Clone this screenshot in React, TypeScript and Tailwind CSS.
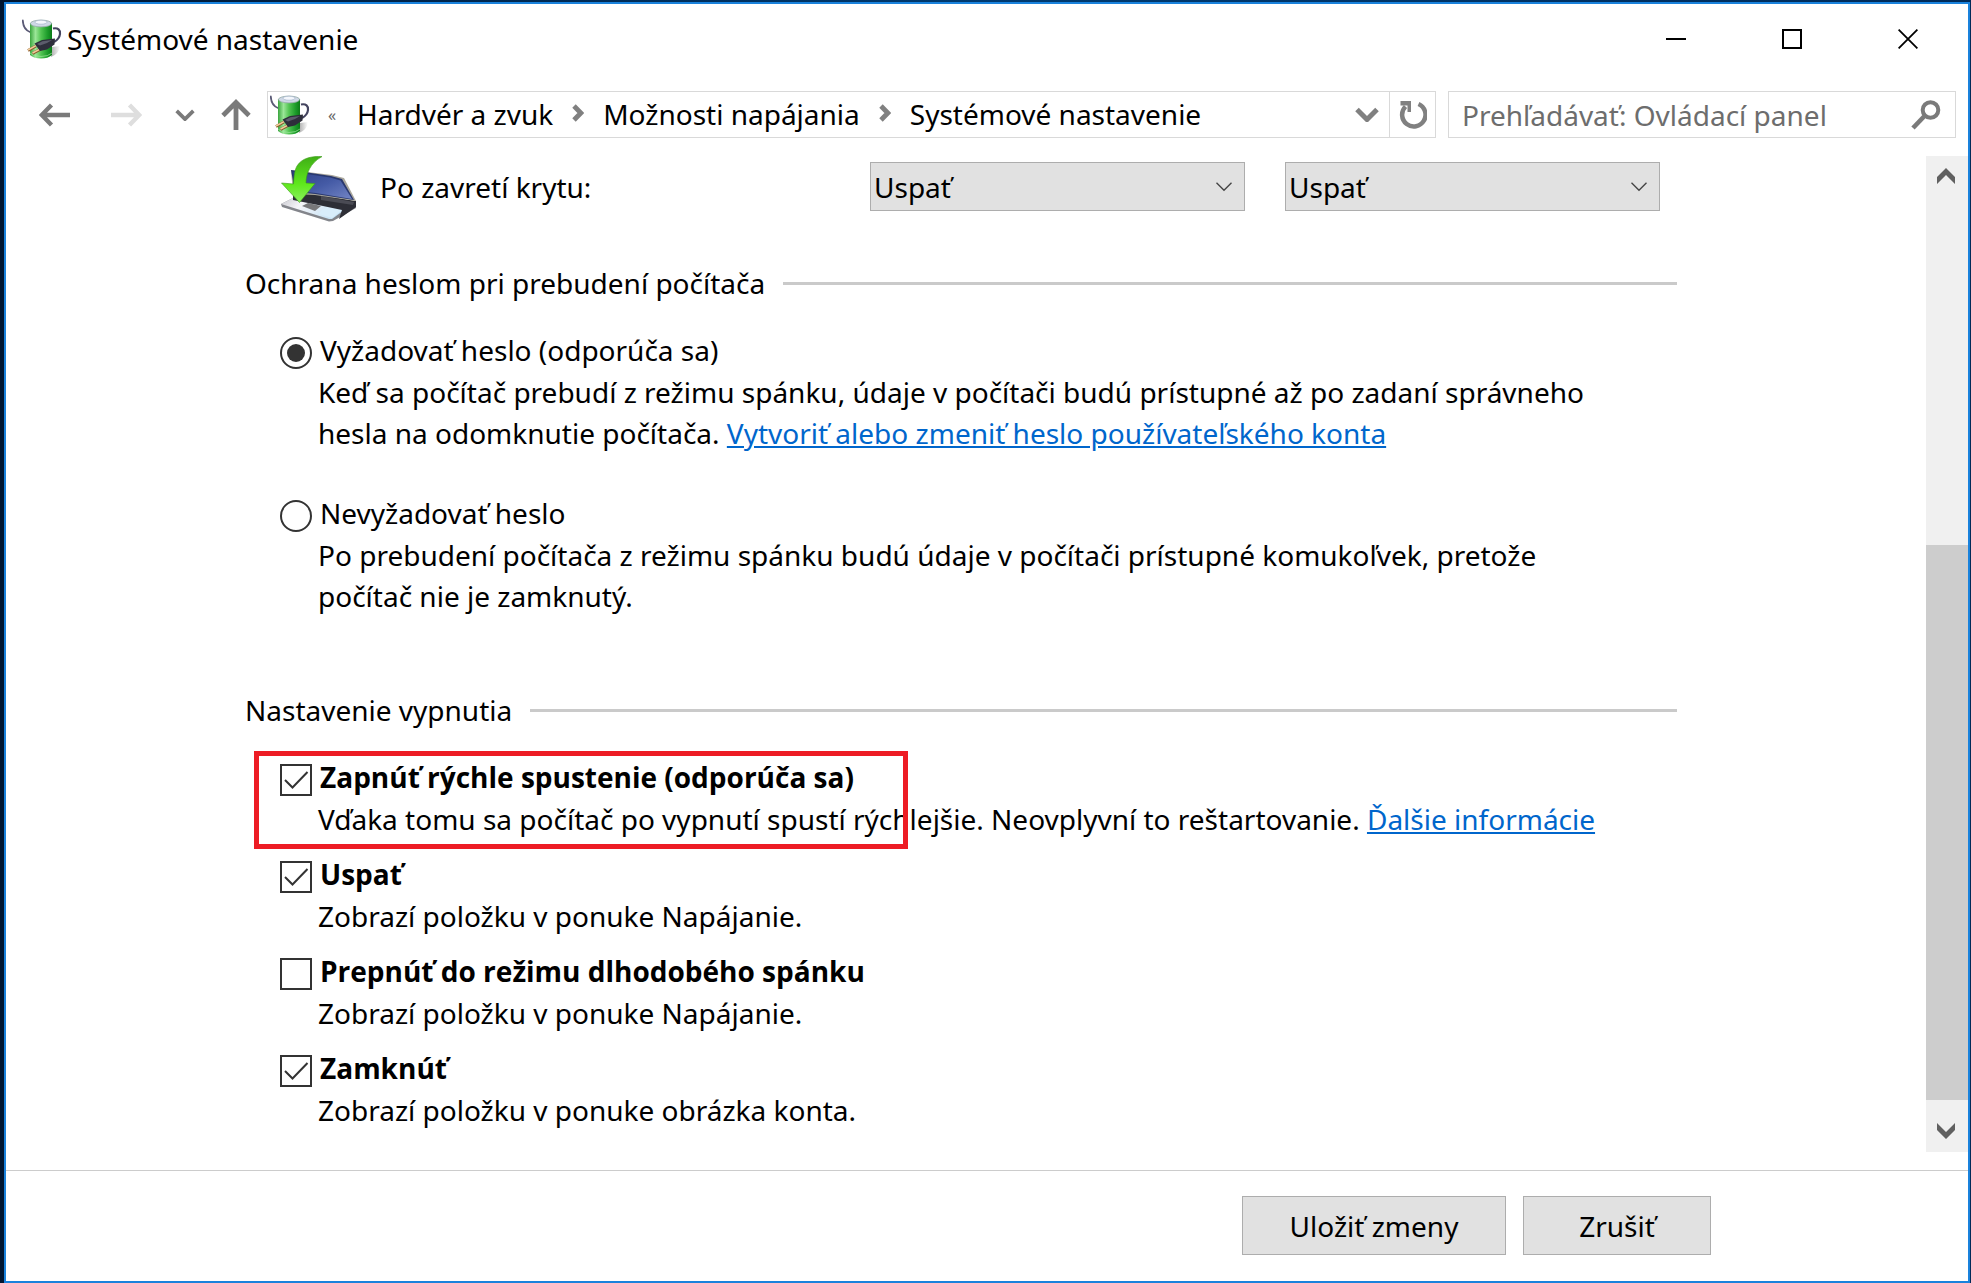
import type { ReactNode } from "react";

function BatteryIcon({ id }: { id: string }) {
  return (
    <svg viewBox="0 0 40 40" className="size-10 shrink-0" aria-hidden="true">
      <defs>
        <linearGradient id={`${id}-body`} x1="0" x2="1" y1="0" y2="0">
          <stop offset="0" stopColor="#3aa53e" />
          <stop offset="0.25" stopColor="#9be698" />
          <stop offset="0.5" stopColor="#52c452" />
          <stop offset="0.8" stopColor="#1c9c2a" />
          <stop offset="1" stopColor="#0c7a18" />
        </linearGradient>
        <linearGradient id={`${id}-shadow`} x1="0" x2="1" y1="0" y2="0">
          <stop offset="0" stopColor="#8a8a8a" />
          <stop offset="1" stopColor="#ffffff" />
        </linearGradient>
      </defs>
      <path d="M30 28 L38 27 Q37 35 29 38 Z" fill={`url(#${id}-shadow)`} opacity="0.7" />
      <path d="M0.8 1.5 C1 7 3 11 8 13" fill="none" stroke="#5a5a75" strokeWidth="1.8" strokeLinecap="round" />
      <path d="M8 4 V36 Q12 39.5 19 39.5 Q26 39.5 30 36 V4 Z" fill={`url(#${id}-body)`} />
      <path d="M8 34 Q12 37.5 19 37.5 Q26 37.5 30 34" fill="none" stroke="#9be69a" strokeWidth="1" opacity="0.7" />
      <ellipse cx="19" cy="4.5" rx="10.600" ry="3.4" fill="#cfd8e6" stroke="#93aaa6" strokeWidth="0.8" />
      <ellipse cx="19" cy="3.2" rx="6" ry="2" fill="#f4f7fc" stroke="#9fb0c8" strokeWidth="0.6" />
      <path d="M31 9.5 C36 8.5 38.5 11 38 15 C37.6 19 35.5 21 32 23" fill="none" stroke="#44445f" strokeWidth="2.2" />
      <path d="M14 27 L6 31.5 M19 30 L10.5 34.5" stroke="#8a5b2c" strokeWidth="2.8" />
      <path d="M14 26.6 L6 31 M19 29.6 L10.5 34" stroke="#f1cd9c" strokeWidth="1.5" />
      <path d="M12.5 24.5 L20 21 L33 19.5 L32.5 25.5 L25 30.5 L18 32 Z" fill="#2e2e3b" />
      <path d="M15 25 L20.3 22.2 L30 21 L25 24 L18 26.500 Z" fill="#5c5c6c" />
    </svg>
  );
}

function LaptopIcon() {
  return (
    <svg viewBox="0 0 78 66" className="h-[66px] w-[78px] shrink-0" aria-hidden="true">
      <defs>
        <linearGradient id="lid" x1="0" x2="1" y1="0" y2="1">
          <stop offset="0" stopColor="#2f4186" />
          <stop offset="0.5" stopColor="#455ba6" />
          <stop offset="1" stopColor="#7284c4" />
        </linearGradient>
        <linearGradient id="deck" x1="0" x2="1" y1="0" y2="0.3">
          <stop offset="0" stopColor="#c9c9cf" />
          <stop offset="0.35" stopColor="#f4f4f8" />
          <stop offset="1" stopColor="#c4e2f6" />
        </linearGradient>
        <linearGradient id="arrow" x1="0" x2="0" y1="0" y2="1">
          <stop offset="0" stopColor="#3fae16" />
          <stop offset="0.6" stopColor="#5fe81c" />
          <stop offset="1" stopColor="#8cf060" />
        </linearGradient>
      </defs>
      <path d="M2 48 L14 42 L75 46 L77 52 L54 65 L50 65.5 L3 51 Z" fill="#83858b" />
      <path d="M2 48 L14 42 L68 52 L53 63 L50 63 Z" fill="url(#deck)" />
      <path d="M23 50 L29 47 L42 50 L36 55 Z" fill="#77777a" />
      <path d="M43 54 L50 50 L66 52 L53 62 L40 58 Z" fill="#d8edfb" />
      <path d="M14 38 L36 38 L77 45 L77 51 L60 63 L63 54 L44 50 L14 44 Z" fill="#2d2e36" />
      <path d="M42 40 L75 46 L74 49 L42 44 Z" fill="#4a4b54" />
      <path d="M12 14 L53 19 L65 22 L77 45 L36 39 L14 38 Z" fill="#aaa79c" />
      <path d="M12 14 L52 20 L63 23 L75 44 L36 38 L16 36 Z" fill="#2a3970" />
      <path d="M14 16 L51 21.500 L61.500 24.500 L73 43 L37 37 L18 35 Z" fill="url(#lid)" />
      <path
        d="M43 0.6 C34 0 23 1.5 18 10 C15.5 14.5 15 20 14.5 28 L2.5 27 L20.5 46.5 L36 27.5 L27 27 C27 18 31 7 43 0.6 Z"
        fill="url(#arrow)"
        stroke="#3a9a18"
        strokeWidth="0.6"
      />
    </svg>
  );
}

function Chevron({ className, width }: { className: string; width: number }) {
  return (
    <svg viewBox="0 0 24 14" className={className} fill="none" stroke="currentColor" strokeWidth={width} aria-hidden="true">
      <path d="M2 2 L12 12 L22 2" />
    </svg>
  );
}

function Crumb({ children }: { children: ReactNode }) {
  return (
    <a href="#" className="whitespace-nowrap">
      {children}
    </a>
  );
}

function CrumbSeparator() {
  return (
    <svg viewBox="0 0 12 18" className="mx-[19px] mb-1 h-[18px] w-3 shrink-0 text-[#808080]" fill="none" stroke="currentColor" strokeWidth="4.800" aria-hidden="true">
      <path d="M2 2 L8.800 9 L2 16" />
    </svg>
  );
}

function ActionSelect({ label }: { label: string }) {
  return (
    <div className="relative w-[375px]">
      <select aria-label={label} className="h-[49px] w-full appearance-none border border-[#adadad] bg-[#e1e1e1] pt-[2px] pl-[3px]">
        <option>Uspať</option>
        <option>Hibernovať</option>
        <option>Vypnúť</option>
      </select>
      <Chevron className="pointer-events-none absolute top-[19px] right-3 h-[11px] w-[18px] text-[#444]" width={1.8} />
    </div>
  );
}

function SectionHeading({ children }: { children: ReactNode }) {
  return (
    <div className="flex h-[38px] items-center gap-[18px]">
      <h2 className="whitespace-nowrap">{children}</h2>
      <div className="h-[3px] flex-1 bg-[#cacaca]" />
    </div>
  );
}

function RadioOption({ label, checked, children }: { label: string; checked?: boolean; children: ReactNode }) {
  return (
    <div>
      <label className="flex h-11 w-fit items-end gap-2">
        <span className="mb-[3px] grid size-8 place-items-center">
          <input
            type="radio"
            name="wake-password"
            defaultChecked={checked}
            className="peer col-start-1 row-start-1 size-8 appearance-none rounded-full border-2 border-[#333] bg-white"
          />
          <span className="pointer-events-none col-start-1 row-start-1 hidden size-[18px] rounded-full bg-[#333] peer-checked:block" />
        </span>
        <span className="leading-[44px]">{label}</span>
      </label>
      <p className="max-w-[1342px] pl-[38px]">{children}</p>
    </div>
  );
}

function CheckOption({ label, checked, marked, children }: { label: string; checked?: boolean; marked?: boolean; children: ReactNode }) {
  return (
    <div className="relative">
      <label className="flex h-11 w-fit items-end gap-2">
        <span className="mb-[3px] grid size-8 place-items-center">
          <input
            type="checkbox"
            defaultChecked={checked}
            className="peer col-start-1 row-start-1 size-8 appearance-none border-2 border-[#333] bg-white"
          />
          <svg
            viewBox="0 0 32 32"
            className="pointer-events-none col-start-1 row-start-1 hidden size-8 peer-checked:block"
            fill="none"
            stroke="#333"
            strokeWidth="2"
            aria-hidden="true"
          >
            <path d="M5 16 L12.500 23.500 L27.500 8" />
          </svg>
        </span>
        <span className="font-['Open_Sans','Noto_Sans',sans-serif] leading-[44px] font-bold">{label}</span>
      </label>
      <p className="pl-[38px]">{children}</p>
      {marked && (
        <div className="pointer-events-none absolute -top-1 -left-[26px] h-[98px] w-[654px] border-5 border-[#ed1c24]" />
      )}
    </div>
  );
}

export default function App() {
  return (
    <div className="flex min-h-screen flex-col bg-linear-to-r from-[#001530] via-[#003a70] to-[#002a58] pt-[2px] pr-px pl-1 font-['Noto_Sans','Open_Sans',sans-serif] text-[28px] leading-[41px] text-black">
      <div className="flex flex-1 flex-col border-2 border-[#1a82dc] bg-white">
        <header className="flex h-[70px] items-center pr-[2px]">
          <div className="flex flex-1 items-center gap-[5px] pl-4">
            <BatteryIcon id="title" />
            <h1>Systémové nastavenie</h1>
          </div>
          <div className="flex self-stretch">
            <button aria-label="Minimalizovať" className="grid w-[116px] place-items-center">
              <svg viewBox="0 0 20 20" className="size-5" stroke="black" strokeWidth="2" fill="none">
                <path d="M0 10 H20" />
              </svg>
            </button>
            <button aria-label="Maximalizovať" className="grid w-[116px] place-items-center">
              <svg viewBox="0 0 20 20" className="size-5" stroke="black" strokeWidth="2" fill="none">
                <path d="M1 1 H19 V19 H1 Z" />
              </svg>
            </button>
            <button aria-label="Zavrieť" className="grid w-[116px] place-items-center">
              <svg viewBox="0 0 20 20" className="size-5" stroke="black" strokeWidth="1.800" fill="none">
                <path d="M0.600 0.600 L19.400 19.400 M19.400 0.600 L0.600 19.400" />
              </svg>
            </button>
          </div>
        </header>

        <nav className="flex h-16 items-stretch pt-[17px] pr-3 pl-3">
          <button aria-label="Späť" className="grid w-[72px] place-items-center text-[#7a7a7a]">
            <svg viewBox="0 0 31 24" className="h-6 w-[31px]" fill="none" stroke="currentColor" strokeWidth="4.400">
              <path d="M31 12 H3 M12.500 2 L2.800 12 L12.500 22" />
            </svg>
          </button>
          <button aria-label="Dopredu" disabled className="grid w-[72px] place-items-center text-[#dedede]">
            <svg viewBox="0 0 31 24" className="h-6 w-[31px]" fill="none" stroke="currentColor" strokeWidth="4.400">
              <path d="M0 12 H28 M18.500 2 L28.200 12 L18.500 22" />
            </svg>
          </button>
          <button aria-label="Posledné umiestnenia" className="grid w-[46px] place-items-center text-[#7a7a7a]">
            <Chevron className="h-3 w-5" width={4.4} />
          </button>
          <button aria-label="Nahor" className="mr-1 grid w-[55px] place-items-center text-[#7a7a7a]">
            <svg viewBox="0 0 30 31" className="h-[31px] w-[30px]" fill="none" stroke="currentColor" strokeWidth="4.800">
              <path d="M15 31 V4 M2 16.500 L15 3.500 L28 16.500" />
            </svg>
          </button>
          <div className="flex flex-1 items-center border border-[#d9d9d9] pl-[2px]">
            <BatteryIcon id="address" />
            <span className="mr-[3px] w-11 text-center text-base text-[#666]">«</span>
            <Crumb>Hardvér a zvuk</Crumb>
            <CrumbSeparator />
            <Crumb>Možnosti napájania</Crumb>
            <CrumbSeparator />
            <Crumb>Systémové nastavenie</Crumb>
            <button aria-label="Predchádzajúce umiestnenia" className="mr-[6px] ml-auto grid w-8 place-items-center text-[#808080]">
              <Chevron className="h-[15px] w-6" width={5} />
            </button>
            <button aria-label="Obnoviť" className="grid w-[46px] place-items-center self-stretch border-l border-[#d9d9d9] text-[#808080]">
              <svg viewBox="0 0 28 28" className="size-7" aria-hidden="true">
                <path d="M19.500 3 A11.700 11.700 0 1 1 6.500 5.500" fill="none" stroke="currentColor" strokeWidth="4.500" />
                <path d="M1.500 0 H12 V11 H8.500 V4.500 H1.500 Z" fill="currentColor" />
              </svg>
            </button>
          </div>
          <div className="ml-3 flex w-[508px] items-center border border-[#d9d9d9] pr-[14px] pl-[13px]">
            <input
              type="text"
              aria-label="Prehľadávať"
              placeholder="Prehľadávať: Ovládací panel"
              className="min-w-0 flex-1 pt-[2px] outline-none placeholder:text-[#6d6d6d]"
            />
            <button aria-label="Hľadať" className="text-[#7a7a7a]">
              <svg viewBox="0 0 30 30" className="size-[30px]" fill="none" stroke="currentColor">
                <circle cx="19.500" cy="10" r="7.800" strokeWidth="4" />
                <path d="M13.500 16 L2 28" strokeWidth="4.600" />
              </svg>
            </button>
          </div>
        </nav>

        <div className="mt-[18px] mb-[18px] flex flex-1">
          <main className="flex-1 pl-[239px]">
            <div className="max-w-[1432px]">
              <div className="flex items-start pl-[34px]">
                <LaptopIcon />
                <div className="mt-[6px] flex flex-1 gap-10 pl-[23px]">
                  <span className="w-[450px] leading-[51px]">Po zavretí krytu:</span>
                  <ActionSelect label="Po zavretí krytu, napájanie z batérie" />
                  <ActionSelect label="Po zavretí krytu, napájanie zo siete" />
                </div>
              </div>

              <section className="mt-[42px]">
                <SectionHeading>Ochrana heslom pri prebudení počítača</SectionHeading>
                <div className="mt-[26px] flex flex-col gap-[37px] pl-[35px]">
                  <RadioOption label="Vyžadovať heslo (odporúča sa)" checked>
                    Keď sa počítač prebudí z režimu spánku, údaje v počítači budú prístupné až po zadaní správneho hesla na
                    odomknutie počítača.{" "}
                    <a href="#" className="text-[#0066cc] underline">
                      Vytvoriť alebo zmeniť heslo používateľského konta
                    </a>
                  </RadioOption>
                  <RadioOption label="Nevyžadovať heslo">
                    Po prebudení počítača z režimu spánku budú údaje v počítači prístupné komukoľvek, pretože počítač nie je
                    zamknutý.
                  </RadioOption>
                </div>
              </section>

              <section className="mt-[74px]">
                <SectionHeading>Nastavenie vypnutia</SectionHeading>
                <div className="mt-[26px] flex flex-col gap-3 pl-[35px]">
                  <CheckOption label="Zapnúť rýchle spustenie (odporúča sa)" checked marked>
                    Vďaka tomu sa počítač po vypnutí spustí rýchlejšie. Neovplyvní to reštartovanie.{" "}
                    <a href="#" className="text-[#0066cc] underline">
                      Ďalšie informácie
                    </a>
                  </CheckOption>
                  <CheckOption label="Uspať" checked>
                    Zobrazí položku v ponuke Napájanie.
                  </CheckOption>
                  <CheckOption label="Prepnúť do režimu dlhodobého spánku">Zobrazí položku v ponuke Napájanie.</CheckOption>
                  <CheckOption label="Zamknúť" checked>
                    Zobrazí položku v ponuke obrázka konta.
                  </CheckOption>
                </div>
              </section>
            </div>
          </main>
          <div className="flex w-[42px] flex-col bg-[#f0f0f0] text-[#606060]">
            <button aria-label="Posunúť nahor" className="grid h-10 place-items-center pr-[2px]">
              <svg viewBox="0 0 18 16" className="h-4 w-[18px]" fill="currentColor">
                <path d="M9 0 L18 9 V16 L9 7 L0 16 V9 Z" />
              </svg>
            </button>
            <div className="flex flex-1 flex-col">
              <div className="flex-[349]" />
              <div className="flex-[555] bg-[#cdcdcd]" />
              <div className="flex-[10]" />
            </div>
            <button aria-label="Posunúť nadol" className="grid h-[42px] place-items-center pr-[2px]">
              <svg viewBox="0 0 18 16" className="h-4 w-[18px]" fill="currentColor">
                <path d="M9 16 L18 7 V0 L9 9 L0 0 V7 Z" />
              </svg>
            </button>
          </div>
        </div>

        <footer className="flex justify-end gap-[17px] border-t border-[#cccccc] pt-[25px] pr-[257px] pb-[26px]">
          <button className="h-[59px] w-[264px] border border-[#adadad] bg-[#e1e1e1] pt-[2px]">Uložiť zmeny</button>
          <button className="h-[59px] w-[188px] border border-[#adadad] bg-[#e1e1e1] pt-[2px]">Zrušiť</button>
        </footer>
      </div>
    </div>
  );
}
